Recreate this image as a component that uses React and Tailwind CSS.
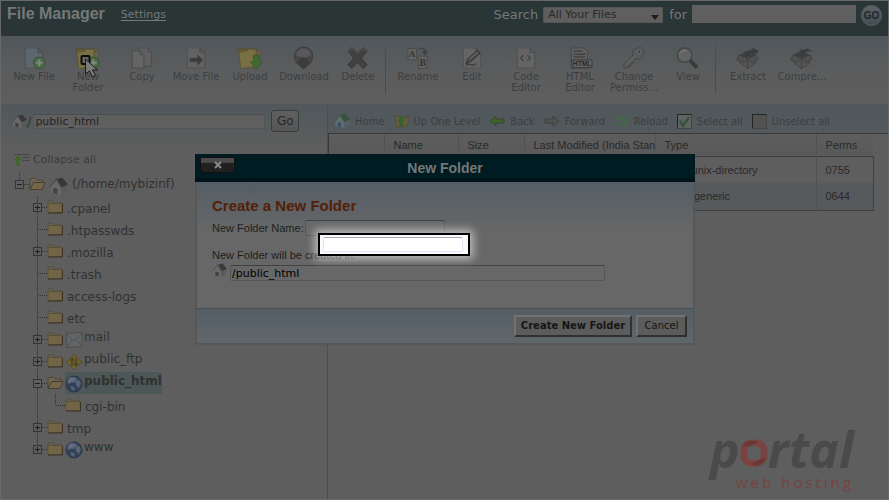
import React from "react";

const verdana = "font-['DejaVu_Sans','Open_Sans',sans-serif]";
const arial = "font-['Liberation_Sans',Arial,sans-serif]";

/* ---------- icons ---------- */

function Page({ fill = "#646464" }) {
  return (
    <>
      <path d="M3.5 1.5h13l5 5v16h-18z" fill={fill} stroke="#505050" />
      <path d="M16.5 1.5v5h5z" fill="#5c5c5c" stroke="#4b4b4b" />
    </>
  );
}

function FolderShape() {
  return (
    <>
      <path d="M15 8l9-5-2 14-6 5z" fill="#686052" stroke="#544c38" strokeWidth=".6" />
      <path d="M0 3l7-1 2 1 10-1v17l-3 3-13 1z" fill="#665b30" stroke="#50482b" strokeWidth=".6" />
      <path d="M1 6l8-1 2-2 8 0 -2 18-14 2z" fill="#777044" stroke="#5c5434" strokeWidth=".6" />
    </>
  );
}

function PlusBadge() {
  return (
    <>
      <circle cx="18" cy="17" r="6" fill="#4c6b4a" stroke="#3a5838" strokeWidth="1.2" />
      <path d="M18 13.500v7M14.500 17h7" stroke="#7f8a7e" strokeWidth="2" />
    </>
  );
}

function Box() {
  return (
    <>
      <path d="M3 9l9 4 9-4-1 9-8 5-7-5z" fill="#555" stroke="#454545" />
      <path d="M12 13v10M3 9L1 14l7 3 4-4 5 4 6-4-2-4" fill="#505050" stroke="#404040" />
      <path d="M3 9l9-5 9 5-9 4z" fill="#3e3e3e" />
    </>
  );
}

const toolIcons = {
  newFile: (
    <>
      <Page fill="#5d686e" />
      <PlusBadge />
    </>
  ),
  newFolder: (
    <>
      <FolderShape />
      <PlusBadge />
    </>
  ),
  copy: (
    <>
      <path d="M9.500 1.500h9l4 4v15h-13z" fill="#606060" stroke="#4b4b4b" />
      <path d="M2.500 4.500h8l4 4v14h-12z" fill="#656565" stroke="#4b4b4b" />
      <path d="M10.500 4.500v4h4M18.500 1.500v4h4" fill="none" stroke="#4b4b4b" />
    </>
  ),
  move: (
    <>
      <Page fill="#626262" />
      <path d="M6 12h8V8.500l6 5.500-6 5.500V16H6z" fill="#3b3b3b" stroke="#4c4c4c" strokeWidth=".6" />
    </>
  ),
  upload: (
    <>
      <FolderShape />
      <path d="M16 9h6v7h3.500l-6.500 8-6-8h3z" fill="#40692f" stroke="#365529" strokeWidth=".7" />
    </>
  ),
  download: (
    <>
      <circle cx="12" cy="10" r="9.500" fill="#484848" stroke="#3a3a3a" />
      <path d="M4 9q1-7 8-7 7 0 8 7-3 2-8 2T4 9" fill="#595959" />
      <path d="M7 12h10v4h4l-9 8-9-8h4z" fill="#3c3c3c" stroke="#4b4b4b" strokeWidth=".6" />
    </>
  ),
  del: (
    <>
      <path d="M2 5l4-4 6 6 6-6 4 4-6 7 6 7-4 4-6-6-6 6-4-4 6-7z" fill="#404040" stroke="#393939" />
      <path d="M3 5l3-3 6 6 6-6 3 3" fill="none" stroke="#565656" />
    </>
  ),
  rename: (
    <>
      <path d="M2 2h9v12H2zM13 10h9v13h-9z" fill="#626262" stroke="#4a4a4a" />
      <text x="3" y="11" fontSize="9" fontWeight="700" fill="#333" fontFamily="Liberation Serif, serif">A</text>
      <text x="14" y="20" fontSize="10" fontWeight="700" fill="#333" fontFamily="Liberation Serif, serif">B</text>
      <path d="M13 3q6-4 7 4M17 5l3 3 2-4" fill="none" stroke="#404040" strokeWidth="1.500" />
    </>
  ),
  edit: (
    <>
      <Page />
      <path d="M6 18l2-5 10-9 3 3L11 16zM6 20q3-3 5-1t6-1" fill="#4a4a4a" stroke="#333" />
      <path d="M10 13l8-7" stroke="#777" />
    </>
  ),
  code: (
    <>
      <Page />
      <path d="M10 9l-3 3 3 3M14 9l3 3-3 3" fill="none" stroke="#404040" strokeWidth="1.300" />
    </>
  ),
  html: (
    <>
      <path d="M3.500 1.500h13l4 4v17h-17z" fill="#606060" stroke="#484848" />
      <path d="M6 5h9M6 8h12M6 11h12" stroke="#404040" strokeWidth="1.500" />
      <path d="M4 14h21v8H4z" fill="#646464" stroke="#383838" />
      <text x="5" y="20.500" fontSize="7" fontWeight="700" fill="#292929" fontFamily="Liberation Sans, sans-serif">HTML</text>
    </>
  ),
  key: (
    <>
      <path d="M1 20L11 10q-1-6 4-8 5-2 7 1 2 4-1 8-3 3-7 2l-2 2v2h-2v2H8v2H6l-3 2z" fill="#5a5a5a" stroke="#444" />
      <circle cx="18" cy="5.500" r="2" fill="#404040" stroke="#707070" />
      <path d="M4 19l9-9" stroke="#707070" />
    </>
  ),
  view: (
    <>
      <path d="M14 14l8 8" stroke="#3b3b3b" strokeWidth="4" />
      <circle cx="9" cy="9" r="7.500" fill="#646464" stroke="#444" strokeWidth="1.500" />
      <path d="M5 7q2-4 6-3" stroke="#757575" fill="none" strokeWidth="1.500" />
    </>
  ),
  extract: (
    <>
      <Box />
      <path d="M9 10q2-6 8-7V1l7 4-6 5V7q-4 0-7 5z" fill="#3b3b3b" stroke="#474747" strokeWidth=".6" />
    </>
  ),
  compress: (
    <>
      <Box />
      <path d="M23 5q-5-5-10-1l-2-2-1 10 8-3-3-2q3-3 8-2z" fill="#3b3b3b" stroke="#474747" strokeWidth=".6" />
    </>
  ),
};

function House({ size = 14, tint = false }) {
  return (
    <svg width={size} height={size} viewBox="0 0 18 18" className="shrink-0" aria-hidden="true">
      <path d="M1.500 9.500L7 3l4.500 6v8l-10-2z" fill={tint ? "#5f6b6e" : "#686868"} />
      <path d="M11.500 9.500l5-2.500v7.500l-5 2.500z" fill={tint ? "#536165" : "#5a5a5a"} />
      <path d="M7 2l5.500-1.500L18 7l-6.500 3z" fill={tint ? "#31543a" : "#393939"} />
      <path d="M.5 9.500L7 2l4.500 7.500" fill="none" stroke={tint ? "#3f5546" : "#4a4a4a"} />
      <path d="M4 10.500l4 .5v5l-4-.8z" fill={tint ? "#34546a" : "#424242"} />
    </svg>
  );
}

function Folder({ open = false }) {
  return (
    <svg width="17" height="14" viewBox="0 0 17 14" className="shrink-0" aria-hidden="true">
      {open ? (
        <>
          <path d="M1 12V2l5-1 2 2h6v3" fill="#6e6653" stroke="#4e4739" />
          <path d="M1 12.500L4.500 5.500H16l-3 7z" fill="#75664a" stroke="#463e2e" />
        </>
      ) : (
        <>
          <path d="M1 4V2l1-1h4l1 2h8v2" fill="#6a6455" stroke="#544e41" />
          <path d="M1 3.500h14v9H1z" fill="#726446" stroke="#5a5038" />
          <path d="M15.500 4v9H1" fill="none" stroke="#3b3324" />
        </>
      )}
    </svg>
  );
}

function Globe() {
  return (
    <svg width="18" height="18" viewBox="0 0 18 18" className="shrink-0" aria-hidden="true">
      <circle cx="9" cy="9" r="8" fill="#344058" stroke="#2c374c" />
      <path d="M3 5l3-3 5 1-2 3-3 1-1 2-3-1zM11 7l3-2 2 3-2 5-3-3zM6 11l4 2-1 3-3-2z" fill="#596476" />
      <ellipse cx="8" cy="5" rx="5" ry="3" fill="#6b7685" opacity=".5" />
    </svg>
  );
}

function Mail() {
  return (
    <svg width="18" height="18" viewBox="0 0 18 18" className="shrink-0" aria-hidden="true">
      <path d="M1 2.500l16-1v14l-15 1z" fill="#616568" stroke="#4b4f52" />
      <path d="M1 3l8 7 8-8M2 16l5-7M17 15l-6-6" fill="none" stroke="#4e5255" />
    </svg>
  );
}

function Ftp() {
  return (
    <svg width="18" height="18" viewBox="0 0 18 18" className="shrink-0" aria-hidden="true">
      <path d="M9 1l8 8-8 8-8-8z" fill="#6c602c" stroke="#57502d" />
      <path d="M7 13V6M5 8l2-3 2 3M11 5v7M9 10l2 3 2-3" fill="none" stroke="#3d3822" />
    </svg>
  );
}

/* Connector lines and the expand / collapse box of one tree row. */
function Guide({ state, last, width = 15 }) {
  return (
    <svg width={width} height="22" viewBox={`0 0 ${width} 22`} className="shrink-0" aria-hidden="true">
      <path d={last ? "M5.500 0V11" : "M5.500 0V22"} stroke="#303030" strokeDasharray="1 1" />
      <path d={`M6 11.500H${width}`} stroke="#303030" strokeDasharray="1 1" />
      {state && (
        <>
          <rect x="1.500" y="7.500" width="8" height="8" fill="#5e5e5e" stroke="#343434" />
          <path d={state === "plus" ? "M3 11.500h5M5.500 9v5" : "M3 11.500h5"} stroke="#202020" />
        </>
      )}
    </svg>
  );
}

function Arrow({ left = false, fill }) {
  return (
    <svg width="16" height="12" viewBox="0 0 16 12" className="shrink-0" aria-hidden="true">
      <path
        d={left ? "M1 6l6-5v3h8v4H7v3z" : "M15 6L9 1v3H1v4h8v3z"}
        fill={fill}
        stroke="#3a3d3a"
        strokeWidth=".8"
      />
    </svg>
  );
}

/* ---------- header and toolbar ---------- */

function Header() {
  return (
    <header className={`flex h-[35px] shrink-0 items-start bg-[#2a3536] pl-[6px] pr-[6px] text-[#747979] ${verdana}`}>
      <h1 className={`pt-[3px] text-[16px] leading-[20px] font-bold ${arial}`}>File Manager</h1>
      <a href="#settings" className="ml-4 pt-[5px] text-[11px] leading-[18px] underline underline-offset-2">
        Settings
      </a>
      <form className="ml-auto flex items-start" onSubmit={(e) => e.preventDefault()}>
        <label htmlFor="scope" className="pt-[5px] text-[13px] leading-[18px]">
          Search
        </label>
        <div className="relative ml-[5px] mt-[6px]">
          <select
            id="scope"
            className="block h-4 w-[120px] appearance-none rounded-[1px] border border-[#555] bg-[#5f5f5f] pl-1 text-[11px] leading-[14px] text-[#282828]"
          >
            <option>All Your Files</option>
          </select>
          <svg className="pointer-events-none absolute right-1 top-[8px]" width="8" height="5" aria-hidden="true">
            <path d="M0 0h8L4 5z" fill="#1c1c1c" />
          </svg>
        </div>
        <label htmlFor="query" className="ml-[6px] pt-[5px] text-[13px] leading-[18px]">
          for
        </label>
        <input id="query" className="ml-[5px] mt-1 h-[18px] w-[164px] bg-[#5f5f5f]" />
        <button
          className={`ml-[5px] mt-[4px] h-[21px] w-[21px] rounded-full border border-[#596164] bg-linear-to-b from-[#596266] to-[#434c4f] text-[10px] leading-[18px] font-bold text-[#202627] ${arial}`}
        >
          GO
        </button>
      </form>
    </header>
  );
}

const tools = [
  ["newFile", "New File"],
  ["newFolder", "New Folder"],
  ["copy", "Copy"],
  ["move", "Move File"],
  ["upload", "Upload"],
  ["download", "Download"],
  ["del", "Delete"],
  null,
  ["rename", "Rename"],
  ["edit", "Edit"],
  ["code", "Code Editor"],
  ["html", "HTML Editor"],
  ["key", "Change Permiss..."],
  ["view", "View"],
  null,
  ["extract", "Extract"],
  ["compress", "Compre..."],
];

function Toolbar() {
  return (
    <nav className={`flex h-[69px] shrink-0 border-b border-[#525657] bg-linear-to-b from-[#50575b] via-[#5b5c5d] to-[#5e5e5e] pl-[6px] ${verdana}`}>
      {tools.map((t, i) =>
        t ? (
          <button
            key={t[0]}
            className="flex w-[54px] shrink-0 flex-col items-center pt-[10px] text-[10px] leading-[11px] text-[#3d3f3f]"
          >
            <svg width="24" height="25" viewBox="0 0 25 25" aria-hidden="true" className="shrink-0 overflow-visible">
              {toolIcons[t[0]]}
            </svg>
            <span>{t[1]}</span>
          </button>
        ) : (
          <div key={i} className="mr-[5px] mt-[10px] h-12 w-px bg-[#4a4c4d]" />
        )
      )}
    </nav>
  );
}

/* ---------- folder tree ---------- */

const folders = [
  { name: ".cpanel", state: "plus" },
  { name: ".htpasswds" },
  { name: ".mozilla", state: "plus" },
  { name: ".trash" },
  { name: "access-logs" },
  { name: "etc" },
  { name: "mail", state: "plus", icon: <Mail /> },
  { name: "public_ftp", state: "plus", icon: <Ftp /> },
  { name: "public_html", state: "minus", icon: <Globe />, selected: true },
  { name: "cgi-bin", nested: true },
  { name: "tmp", state: "plus" },
  { name: "www", state: "plus", icon: <Globe />, last: true },
];

function TreeRow({ f }) {
  return (
    <li className="flex h-[22px] items-center">
      {f.nested ? (
        <>
          <svg width="18" height="22" className="shrink-0" aria-hidden="true">
            <path d="M5.500 0V22" stroke="#303030" strokeDasharray="1 1" />
          </svg>
          <Guide last />
        </>
      ) : (
        <Guide state={f.state} last={f.last} />
      )}
      <Folder open={f.state === "minus"} />
      {f.icon ? (
        <span className={`ml-px flex h-[22px] items-start ${f.selected ? "rounded-xs bg-[#4c5757] font-bold" : ""}`}>
          <span className="pt-[3px]">{f.icon}</span>
          <span className="pl-px leading-[18px]">{f.name}</span>
        </span>
      ) : (
        <span className="pl-[3px] pt-1 leading-[18px]">{f.name}</span>
      )}
    </li>
  );
}

function Sidebar() {
  return (
    <aside className={`w-[326px] shrink-0 bg-[#5e5e5e] text-[#303131] ${verdana}`}>
      <form
        className="flex h-[43px] items-start bg-linear-to-b from-[#50585c] to-[#5e5e5e] pl-[11px] pt-[5px]"
        onSubmit={(e) => e.preventDefault()}
      >
        <span className="pt-[4px]">
          <House size={15} />
        </span>
        <label htmlFor="path" className="pt-[4px] text-[13px] leading-[16px]">
          /
        </label>
        <input
          id="path"
          defaultValue="public_html"
          className="ml-[2px] mt-1 h-[15px] w-[232px] border border-[#555] border-t-[#4c4c4c] bg-[#5f5f5f] px-px text-[11px] leading-[13px] text-[#242424]"
        />
        <button className="ml-[6px] h-[22px] w-[28px] rounded-[3px] border border-[#3b3b3b] bg-linear-to-b from-[#606060] to-[#555] text-[12px] leading-[18px] text-[#252525]">
          Go
        </button>
      </form>
      <button className="ml-[13px] mt-[4px] flex h-4 items-center text-[11px] text-[#3b3c3c]">
        <svg width="17" height="14" viewBox="0 0 17 14" aria-hidden="true">
          <path d="M0 1.500h16M8 4.500h8M8 7.500h8" stroke="#474747" />
          <path d="M0 7l4-5 4 5H6v6H2V7z" fill="#43652f" />
        </svg>
        <span className="ml-[2px]">Collapse all</span>
      </button>
      <div className="mt-[4px] flex h-[24px] items-center pl-[13px] text-[12px]">
        <Guide state="minus" last />
        <Folder open />
        <span className="ml-[3px] mt-1">
          <House size={19} />
        </span>
        <span className="ml-1">(/home/mybizinf)</span>
      </div>
      <ul className="pl-[31px] text-[12px]">
        {folders.map((f) => (
          <TreeRow key={f.name} f={f} />
        ))}
      </ul>
    </aside>
  );
}

/* ---------- file list ---------- */

const navItem = "flex items-center";

function Tick({ id, label, checked }) {
  return (
    <div className={navItem}>
      <span className="relative flex">
        <input
          id={id}
          type="checkbox"
          defaultChecked={checked}
          className={`h-[15px] w-[15px] appearance-none border border-t-[#242424] border-l-[#242424] border-r-[#444] border-b-[#444] ${checked ? "bg-[#606361]" : "bg-[#525252]"}`}
        />
        {checked && (
          <svg className="pointer-events-none absolute left-0 top-0" width="15" height="15" aria-hidden="true">
            <path d="M3 7l3 5 6-9" fill="none" stroke="#31563a" strokeWidth="2.500" />
          </svg>
        )}
      </span>
      <label htmlFor={id} className="ml-[5px]">
        {label}
      </label>
    </div>
  );
}

const rows = [
  ["", "", "", "httpd/unix-directory", "0755"],
  ["", "", "", "text/x-generic", "0644"],
];

function FileList() {
  return (
    <main className="min-w-0 flex-1 border-l border-[#4b4e4f] bg-[#5e5e5e]">
      <div className={`flex h-[28px] items-center gap-[9px] bg-linear-to-b from-[#50585c] to-[#53595c] pl-[6px] pt-[4px] text-[10px] text-[#3b3f40] ${verdana}`}>
        <button className={navItem}>
          <House size={16} tint />
          <span className="ml-[5px]">Home</span>
        </button>
        <button className={navItem}>
          <svg width="15" height="14" viewBox="0 0 15 14" aria-hidden="true">
            <path d="M1 2h5l1 2 7-2v9l-5 2H2z" fill="#655e3c" stroke="#4b482f" strokeWidth=".7" />
            <path d="M7 2l4 5H9v5H5V7H3z" fill="#3b6030" />
          </svg>
          <span className="ml-[5px]">Up One Level</span>
        </button>
        <button className={navItem}>
          <Arrow left fill="#3e6329" />
          <span className="ml-[5px]">Back</span>
        </button>
        <button className={navItem}>
          <Arrow fill="#505252" />
          <span className="ml-[5px]">Forward</span>
        </button>
        <button className={navItem}>
          <svg width="15" height="14" viewBox="0 0 15 14" aria-hidden="true">
            <path d="M1 6V2l2 1q5-3 9 1l2-1v5H9l2-2Q7 3 5 6zM14 8v4l-2-1q-5 3-9-1l-2 1V7h5L4 9q3 3 6-1z" fill="#46664a" />
          </svg>
          <span className="ml-[5px]">Reload</span>
        </button>
        <Tick id="all" label="Select all" checked />
        <Tick id="none" label="Unselect all" />
      </div>
      <div className="border-t border-l border-[#383838]">
        <table className={`w-[544px] table-fixed border-collapse text-left text-[11px] text-[#292929] ${arial}`}>
          <colgroup>
            <col className="w-[55px]" />
            <col className="w-[74px]" />
            <col className="w-[66px]" />
            <col className="w-[131px]" />
            <col className="w-[161px]" />
            <col className="w-[57px]" />
          </colgroup>
          <thead>
            <tr className="h-[22px] border-b border-[#3c3c3c] bg-linear-to-b from-[#5e5e5e] to-[#595959]">
              {["", "Name", "Size", "Last Modified (India Stan", "Type", "Perms"].map((h, i) => (
                <th
                  key={i}
                  className="border-r border-[#525252] pl-[9px] font-normal whitespace-nowrap last:border-r-0"
                >
                  {h}
                </th>
              ))}
            </tr>
          </thead>
          <tbody>
            {rows.map((r, i) => (
              <tr key={i} className={`h-[27px] border-r border-[#404040] ${i ? "border-b bg-[#575a5c]" : ""}`}>
                <td />
                {r.map((c, j) => (
                  <td
                    key={j}
                    className={`whitespace-nowrap pl-[9px] ${j === 3 ? "border-r border-[#505050]" : ""}`}
                  >
                    {c}
                  </td>
                ))}
              </tr>
            ))}
          </tbody>
        </table>
      </div>
    </main>
  );
}

/* ---------- dialog ---------- */

function Dialog() {
  const field = `h-4 rounded-xs border border-[#575757] border-t-[#424242] bg-[#676767] px-px text-black ${verdana} text-[11px] leading-[13px]`;
  const button = `h-[22px] border-2 border-t-[#727272] border-l-[#727272] border-r-[#303030] border-b-[#303030] bg-[#5c5c5c] leading-[18px] whitespace-nowrap text-[#161616] ${verdana}`;
  return (
    <section
      role="dialog"
      aria-labelledby="dialog-title"
      className={`absolute left-[194px] top-[153px] w-[500px] text-[12px] text-[#1d1e1f] ${arial}`}
    >
      <div className="grid h-7 grid-cols-[1fr_auto_1fr] border-b-4 border-[#00151a] bg-[#001c23] px-[5px]">
        <button
          aria-label="Close"
          className="mt-[3px] flex h-[16px] w-[35px] items-center justify-center rounded-b-[4px] border border-[#111] bg-linear-to-b from-[#4b4b4b] from-30% to-[#202020] to-40%"
        >
          <svg width="8" height="8" viewBox="0 0 8 8" aria-hidden="true">
            <path d="M1 1l6 6M7 1L1 7" stroke="#898989" strokeWidth="2" />
          </svg>
        </button>
        <h2 id="dialog-title" className="pt-[3px] text-[14px] leading-[23px] font-bold text-[#747778]">
          New Folder
        </h2>
      </div>
      <div className="border-2 border-t-0 border-[#575757] bg-[#676767]">
        <div className="h-[126px] bg-linear-to-b from-[#545e66] to-[#676767] to-40% px-[15px] pt-[15px]">
          <h3 className="text-[15px] leading-[18px] font-bold text-[#542008]">Create a New Folder</h3>
          <div className="mt-[5px] flex h-4">
            <label htmlFor="folder" className="pt-px text-[11px] leading-[14px]">New Folder Name:</label>
            <input id="folder" className={`ml-px w-[140px] ${field}`} />
          </div>
          <div className="mt-[11px] flex flex-col">
            <label htmlFor="location" className="text-[11px] leading-[16px]">
              New Folder will be created in:
            </label>
            <div className="flex items-start">
              <House size={15} />
              <input id="location" defaultValue="/public_html" className={`ml-[3px] mt-[2px] w-[375px] ${field}`} />
            </div>
          </div>
        </div>
        <div className="flex h-[35px] justify-end gap-1 border-t border-[#4b4e50] bg-linear-to-b from-[#545e66] to-[#60676a] pr-[6px] pt-[6px]">
          <button className={`w-[118px] text-[10px] font-bold ${button}`}>Create New Folder</button>
          <button className={`w-[51px] text-[10px] ${button}`}>Cancel</button>
        </div>
      </div>
    </section>
  );
}

function Spotlight() {
  return (
    <div className="absolute left-[317px] top-[232px] h-[23px] w-[152px] border-2 border-black bg-[#fafbff] px-[3px] pt-[2px] shadow-[0_0_10px_3px_#d8d8d8cc]">
      <input
        aria-label="Folder name"
        className="block h-[15px] w-[140px] rounded-xs border border-[#e2e5ef] border-t-[#a5a9b5] bg-white"
      />
    </div>
  );
}

function Cursor() {
  return (
    <svg className="pointer-events-none absolute left-[79px] top-[53px]" width="20" height="26" aria-hidden="true">
      <rect x="1.500" y="2" width="8" height="8" rx="1" fill="#686868" stroke="#0c0c0c" strokeWidth="2" />
      <path d="M5.500 5v15l4-3 3 6 3-2-3-5h5z" fill="#7a7a7a" stroke="#181818" />
    </svg>
  );
}

function Brand() {
  return (
    <div className="absolute right-[32px] bottom-[8px] w-[146px] font-['Open_Sans',sans-serif] leading-none">
      <div className="flex h-[40px] items-end pb-[2px] text-[50px] leading-[42px] font-bold text-[#4a4a4a] italic">
        <span>p</span>
        <svg width="28" height="28" viewBox="0 0 29 29" className="mb-[3px] shrink-0" aria-hidden="true">
          <rect x="4" y="4" width="21" height="21" rx="8" fill="none" stroke="#784341" strokeWidth="7" />
          <path d="M2 8Q8-1 19 3L10 7zM27 19Q23 30 11 26l9-4z" fill="#693735" />
        </svg>
        <span>rtal</span>
      </div>
      <div className="pl-[26px] pt-px text-[15px] leading-[18px] tracking-[3px] whitespace-nowrap text-[#764341]">
        web hosting
      </div>
    </div>
  );
}

export default function App() {
  return (
    <div className="relative flex min-h-screen flex-col border border-[#686868] bg-[#5e5e5e]">
      <Header />
      <Toolbar />
      <div className="flex flex-1">
        <Sidebar />
        <FileList />
      </div>
      <Brand />
      <Dialog />
      <Spotlight />
      <Cursor />
    </div>
  );
}
